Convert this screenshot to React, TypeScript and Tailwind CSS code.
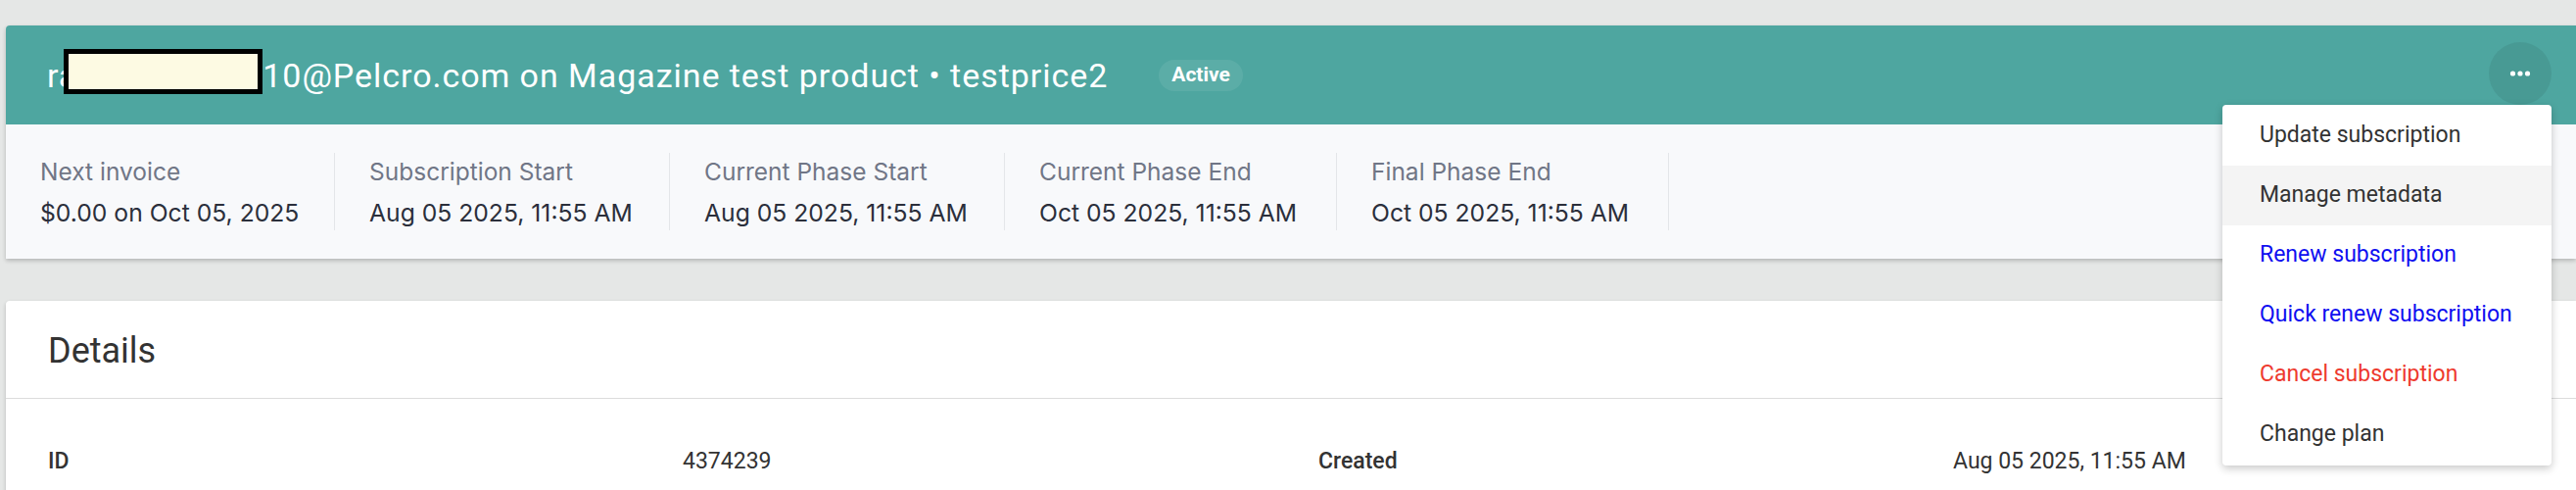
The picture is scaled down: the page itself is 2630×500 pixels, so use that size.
import { useState } from 'react';

type Stat = {
  label: string;
  value: string;
  cls: string;
};

const stats: Stat[] = [
  { label: 'Next invoice', value: '$0.00 on Oct 05, 2025', cls: 'w-[301px]' },
  { label: 'Subscription Start', value: 'Aug 05 2025, 11:55 AM', cls: 'w-[342px] pl-[35px]' },
  { label: 'Current Phase Start', value: 'Aug 05 2025, 11:55 AM', cls: 'w-[342px] pl-[35px]' },
  { label: 'Current Phase End', value: 'Oct 05 2025, 11:55 AM', cls: 'w-[339px] pl-[35px]' },
  { label: 'Final Phase End', value: 'Oct 05 2025, 11:55 AM', cls: 'w-[339px] pl-[35px]' },
];

const menuItems = [
  { label: 'Update subscription', cls: 'text-[#333333]' },
  { label: 'Manage metadata', cls: 'text-[#333333] bg-[#f4f4f4]' },
  { label: 'Renew subscription', cls: 'text-[#0f0ff0]' },
  { label: 'Quick renew subscription', cls: 'text-[#0f0ff0]' },
  { label: 'Cancel subscription', cls: 'text-[#ee3a2e]' },
  { label: 'Change plan', cls: 'text-[#333333]' },
];

const DotsIcon = () => (
  <svg width="24" height="8" viewBox="0 0 24 8" fill="white">
    <circle cx="4.5" cy="4" r="2.6" />
    <circle cx="12" cy="4" r="2.6" />
    <circle cx="19.5" cy="4" r="2.6" />
  </svg>
);

const ActionsMenu = () => {
  const [open, setOpen] = useState<boolean>(true);

  return (
    <div className="relative mb-[4px]">
      <button
        onClick={() => setOpen(!open)}
        className="w-[64px] h-[64px] rounded-full bg-black/[0.07] flex items-center justify-center"
      >
        <DotsIcon />
      </button>
      {open && (
        <div className="absolute top-full right-0 z-10 w-[336px] bg-white rounded-[4px] py-[1px] shadow-[0_3px_8px_rgba(0,0,0,0.22)]">
          {menuItems.map((item) => (
            <div
              key={item.label}
              className={`h-[61px] flex items-center pl-[38px] text-[23px] ${item.cls}`}
            >
              {item.label}
            </div>
          ))}
        </div>
      )}
    </div>
  );
};

export default function App() {
  return (
    <div className="w-[2630px] h-[500px] overflow-hidden bg-[#e5e7e6] pt-[26px] font-['Roboto',sans-serif]">
      <div className="ml-[6px] rounded-tl-[4px] shadow-[0_2px_4px_rgba(0,0,0,0.22)]">
        <div className="h-[101px] bg-[#4ea6a0] rounded-tl-[4px] flex items-center pl-[42px] pr-[25px] text-white">
          <h1 className="text-[34px] tracking-[0.95px] whitespace-nowrap">
            ra
            <span className="inline-block -ml-[14px] w-[203px] h-[46px] border-[5px] border-black bg-[#fdfae3] align-[-7px]" />
            10@Pelcro.com on Magazine test product • testprice2
          </h1>
          <span className="ml-[52px] h-[32px] px-[13px] rounded-full bg-white/[0.08] flex items-center text-[21px] font-bold">
            Active
          </span>
          <div className="ml-auto">
            <ActionsMenu />
          </div>
        </div>
        <div className="bg-[#f8f9fb] flex pl-[35px] py-[29px] font-['Inter',sans-serif]">
          {stats.map((s) => (
            <div key={s.label} className={`border-r border-[#e4e6e9] pt-[4px] pb-[2px] ${s.cls}`}>
              <div className="text-[24.5px] leading-[30px] text-[#707686] whitespace-nowrap">{s.label}</div>
              <div className="mt-[11px] text-[24.7px] leading-[32px] text-[#2b2f3b] whitespace-nowrap">
                {s.value}
              </div>
            </div>
          ))}
        </div>
      </div>

      <div className="ml-[6px] mt-[43px] bg-white rounded-tl-[4px] shadow-[0_2px_4px_rgba(0,0,0,0.2)]">
        <div className="h-[100px] flex items-center pl-[43px] border-b border-[#dcdcdc] pt-[3px]">
          <h2 className="text-[36px] text-[#333333]">Details</h2>
        </div>
        <div className="grid grid-cols-[648px_649px_648px_1fr] pl-[43px] pt-[48px] pb-[40px] text-[23px] leading-[32px] text-[#333333]">
          <div className="font-medium">ID</div>
          <div>4374239</div>
          <div className="font-medium">Created</div>
          <div>Aug 05 2025, 11:55 AM</div>
        </div>
      </div>
    </div>
  );
}
